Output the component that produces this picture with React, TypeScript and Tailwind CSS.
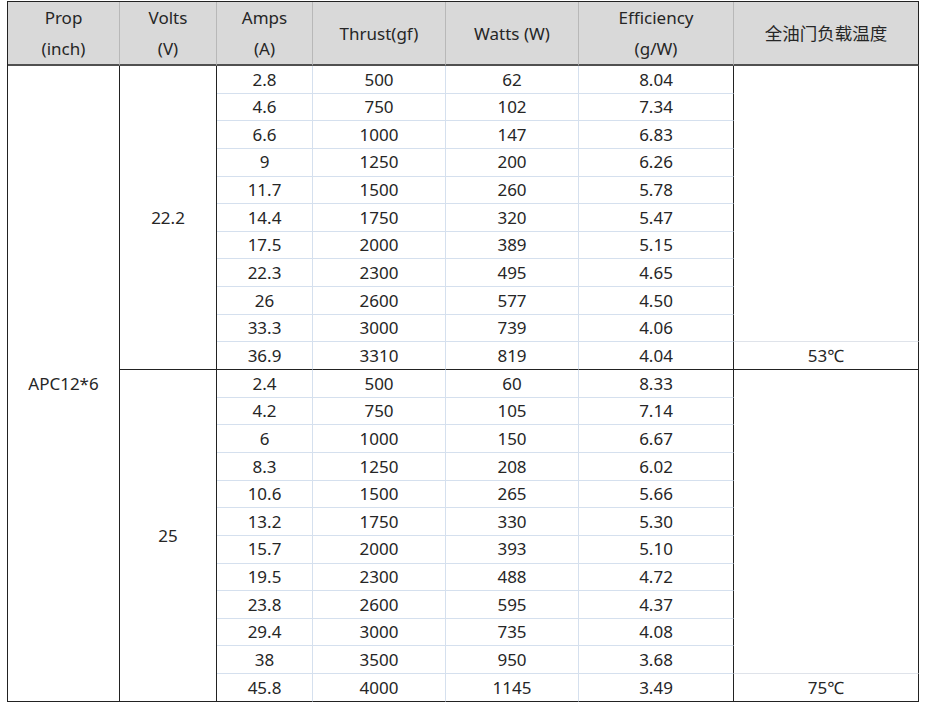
import React from "react";

const g1 = [
  ["2.8", "500", "62", "8.04"],
  ["4.6", "750", "102", "7.34"],
  ["6.6", "1000", "147", "6.83"],
  ["9", "1250", "200", "6.26"],
  ["11.7", "1500", "260", "5.78"],
  ["14.4", "1750", "320", "5.47"],
  ["17.5", "2000", "389", "5.15"],
  ["22.3", "2300", "495", "4.65"],
  ["26", "2600", "577", "4.50"],
  ["33.3", "3000", "739", "4.06"],
  ["36.9", "3310", "819", "4.04"],
];
const g2 = [
  ["2.4", "500", "60", "8.33"],
  ["4.2", "750", "105", "7.14"],
  ["6", "1000", "150", "6.67"],
  ["8.3", "1250", "208", "6.02"],
  ["10.6", "1500", "265", "5.66"],
  ["13.2", "1750", "330", "5.30"],
  ["15.7", "2000", "393", "5.10"],
  ["19.5", "2300", "488", "4.72"],
  ["23.8", "2600", "595", "4.37"],
  ["29.4", "3000", "735", "4.08"],
  ["38", "3500", "950", "3.68"],
  ["45.8", "4000", "1145", "3.49"],
];

const hdr =
  "bg-[#d9d9d9] border-r border-r-[#b8b8b8] border-b-2 border-b-[#505050] flex flex-col items-center justify-center leading-[31px]";

function Group({ rows, start, volts, temp }: { rows: string[][]; start: number; volts: string; temp: string }) {
  const n = rows.length;
  const cells: React.ReactNode[] = [];
  cells.push(
    <div
      key="v"
      className="border-r border-r-[#222] border-b border-b-[#222] flex items-center justify-center"
      style={{ gridColumn: 2, gridRow: `${start} / span ${n}` }}
    >
      {volts}
    </div>
  );
  rows.forEach((r, i) => {
    const last = i === n - 1;
    const bb = last ? "border-b border-b-[#222]" : "border-b border-b-[#d5e0ee]";
    r.forEach((v, j) => {
      const br = j === 3 ? "border-r border-r-[#222]" : "border-r border-r-[#d5e0ee]";
      cells.push(
        <div
          key={`${i}-${j}`}
          className={`${br} ${bb} flex items-center justify-center`}
          style={{ gridColumn: 3 + j, gridRow: start + i }}
        >
          {v}
        </div>
      );
    });
  });
  cells.push(
    <div
      key="te"
      className="border-r border-r-[#222] border-b border-b-[#dfe3ea]"
      style={{ gridColumn: 7, gridRow: `${start} / span ${n - 1}` }}
    />
  );
  cells.push(
    <div
      key="t"
      className="border-r border-r-[#222] border-b border-b-[#222] flex items-center justify-center"
      style={{ gridColumn: 7, gridRow: start + n - 1 }}
    >
      {temp}
    </div>
  );
  return <>{cells}</>;
}

export default function App() {
  return (
    <div
      className="w-[928px] h-[704px] bg-white pt-[1px] pl-[7px] text-[#262626] text-[17px]"
      style={{ fontFamily: '"Noto Sans", "Noto Sans CJK SC", sans-serif' }}
    >
      <div className="grid grid-cols-[112px_97px_96px_133px_133px_155px_185px] grid-rows-[64px_repeat(23,27.65px)] border-l border-t border-[#222] w-[912px]">
        <div className={hdr}>
          <span>Prop</span>
          <span>(inch)</span>
        </div>
        <div className={hdr}>
          <span>Volts</span>
          <span>(V)</span>
        </div>
        <div className={hdr}>
          <span>Amps</span>
          <span>(A)</span>
        </div>
        <div className={hdr}>
          <span>Thrust(gf)</span>
        </div>
        <div className={hdr}>
          <span>Watts (W)</span>
        </div>
        <div className={hdr}>
          <span>Efficiency</span>
          <span>(g/W)</span>
        </div>
        <div className={`${hdr} !border-r-[#222]`}>
          <span className="text-[17.5px]">全油门负载温度</span>
        </div>
        <div
          className="border-r border-r-[#222] border-b border-b-[#222] flex items-center justify-center"
          style={{ gridColumn: 1, gridRow: "2 / span 23" }}
        >
          APC12*6
        </div>
        <Group rows={g1} start={2} volts="22.2" temp="53℃" />
        <Group rows={g2} start={13} volts="25" temp="75℃" />
      </div>
    </div>
  );
}
